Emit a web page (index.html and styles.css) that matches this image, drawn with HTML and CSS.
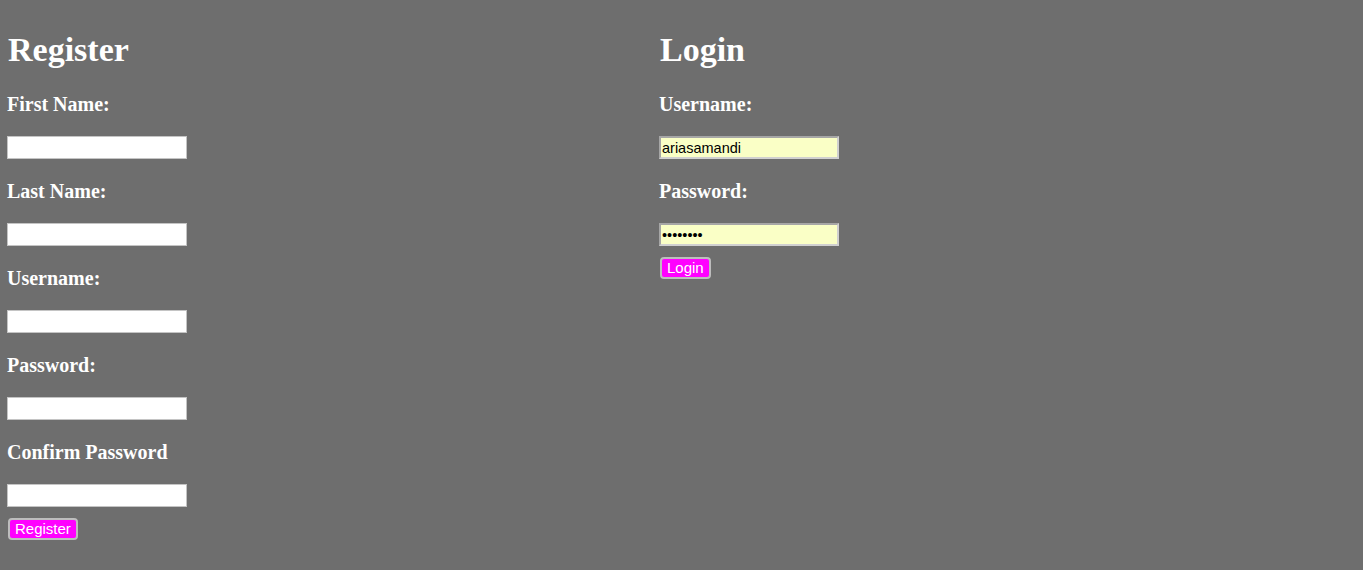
FILE: index.html
```html
<!DOCTYPE html>
<html>
<head>
<meta charset="utf-8">
<title>Register / Login</title>
<link rel="stylesheet" href="styles.css">
</head>
<body>
<div class="page">
  <form class="col col-register">
    <h1 class="title">Register</h1>
    <h3 class="label">First Name:</h3>
    <input class="field" type="text">
    <h3 class="label">Last Name:</h3>
    <input class="field" type="text">
    <h3 class="label">Username:</h3>
    <input class="field" type="text">
    <h3 class="label">Password:</h3>
    <input class="field" type="password">
    <h3 class="label">Confirm Password</h3>
    <input class="field" type="password">
    <button class="btn" type="button">Register</button>
  </form>
  <form class="col col-login">
    <h1 class="title">Login</h1>
    <h3 class="label">Username:</h3>
    <input class="field field-filled" type="text" value="ariasamandi">
    <h3 class="label">Password:</h3>
    <input class="field field-filled" type="password" value="password">
    <button class="btn" type="button">Login</button>
  </form>
</div>
</body>
</html>
```

FILE: styles.css
```css
html, body {
  margin: 0;
  padding: 0;
  background: #6e6e6e;
}
body {
  font-family: "Liberation Serif", "Times New Roman", serif;
  color: #ffffff;
  height: 570px;
  overflow: hidden;
}
.page {
  display: grid;
  grid-template-columns: 652px 1fr;
  padding: 0 8px;
}
.col {
  display: flex;
  flex-direction: column;
  align-items: flex-start;
  margin: 0;
}
.title {
  font-size: 34px;
  line-height: 39px;
  font-weight: bold;
  margin: 30px 0 24px;
}
.label {
  font-size: 20px;
  line-height: 23px;
  font-weight: bold;
  margin: 0 0 20px -1px;
}
.field {
  box-sizing: border-box;
  width: 180px;
  height: 23px;
  margin: 0 0 21px -1px;
  padding: 1px 2px;
  border: 1px solid #c4c4c4;
  background: #ffffff;
  font-family: "Liberation Sans", Arial, sans-serif;
  font-size: 14px;
  color: #000000;
  outline: none;
}
.field-filled {
  border: 2px solid #a6a6a6;
  border-right-color: #d0d0d0;
  border-bottom-color: #d0d0d0;
  background: #faffc6;
  padding: 0 1px;
  font-size: 14.5px;
}
.field + .btn {
  margin-top: -10px;
}
.btn {
  box-sizing: border-box;
  height: 22px;
  padding: 0 5px;
  border: 2px solid #bdbdbd;
  border-radius: 4px;
  background: #ff00ff;
  color: #ffffff;
  font-family: "Liberation Sans", Arial, sans-serif;
  font-size: 15px;
  line-height: 16px;
  cursor: pointer;
}
```
